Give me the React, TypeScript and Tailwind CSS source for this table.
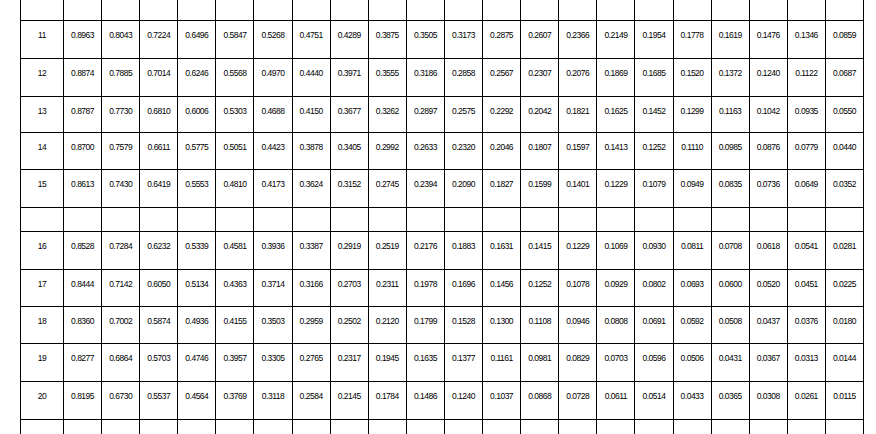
import React from "react";

const data: [string, string[]][] = [
  ["11", "0.8963 0.8043 0.7224 0.6496 0.5847 0.5268 0.4751 0.4289 0.3875 0.3505 0.3173 0.2875 0.2607 0.2366 0.2149 0.1954 0.1778 0.1619 0.1476 0.1346 0.0859".split(" ")],
  ["12", "0.8874 0.7885 0.7014 0.6246 0.5568 0.4970 0.4440 0.3971 0.3555 0.3186 0.2858 0.2567 0.2307 0.2076 0.1869 0.1685 0.1520 0.1372 0.1240 0.1122 0.0687".split(" ")],
  ["13", "0.8787 0.7730 0.6810 0.6006 0.5303 0.4688 0.4150 0.3677 0.3262 0.2897 0.2575 0.2292 0.2042 0.1821 0.1625 0.1452 0.1299 0.1163 0.1042 0.0935 0.0550".split(" ")],
  ["14", "0.8700 0.7579 0.6611 0.5775 0.5051 0.4423 0.3878 0.3405 0.2992 0.2633 0.2320 0.2046 0.1807 0.1597 0.1413 0.1252 0.1110 0.0985 0.0876 0.0779 0.0440".split(" ")],
  ["15", "0.8613 0.7430 0.6419 0.5553 0.4810 0.4173 0.3624 0.3152 0.2745 0.2394 0.2090 0.1827 0.1599 0.1401 0.1229 0.1079 0.0949 0.0835 0.0736 0.0649 0.0352".split(" ")],
  ["16", "0.8528 0.7284 0.6232 0.5339 0.4581 0.3936 0.3387 0.2919 0.2519 0.2176 0.1883 0.1631 0.1415 0.1229 0.1069 0.0930 0.0811 0.0708 0.0618 0.0541 0.0281".split(" ")],
  ["17", "0.8444 0.7142 0.6050 0.5134 0.4363 0.3714 0.3166 0.2703 0.2311 0.1978 0.1696 0.1456 0.1252 0.1078 0.0929 0.0802 0.0693 0.0600 0.0520 0.0451 0.0225".split(" ")],
  ["18", "0.8360 0.7002 0.5874 0.4936 0.4155 0.3503 0.2959 0.2502 0.2120 0.1799 0.1528 0.1300 0.1108 0.0946 0.0808 0.0691 0.0592 0.0508 0.0437 0.0376 0.0180".split(" ")],
  ["19", "0.8277 0.6864 0.5703 0.4746 0.3957 0.3305 0.2765 0.2317 0.1945 0.1635 0.1377 0.1161 0.0981 0.0829 0.0703 0.0596 0.0506 0.0431 0.0367 0.0313 0.0144".split(" ")],
  ["20", "0.8195 0.6730 0.5537 0.4564 0.3769 0.3118 0.2584 0.2145 0.1784 0.1486 0.1240 0.1037 0.0868 0.0728 0.0611 0.0514 0.0433 0.0365 0.0308 0.0261 0.0115".split(" ")],
];

type Row = { h: string; label?: string; vals?: string[]; border: boolean };

const rows: Row[] = [
  { h: "h-[21px]", border: true },
  { h: "h-[38px]", label: data[0][0], vals: data[0][1], border: true },
  { h: "h-[38px]", label: data[1][0], vals: data[1][1], border: true },
  { h: "h-[36px]", label: data[2][0], vals: data[2][1], border: true },
  { h: "h-[37px]", label: data[3][0], vals: data[3][1], border: true },
  { h: "h-[38px]", label: data[4][0], vals: data[4][1], border: true },
  { h: "h-[24px]", border: true },
  { h: "h-[38px]", label: data[5][0], vals: data[5][1], border: true },
  { h: "h-[37px]", label: data[6][0], vals: data[6][1], border: true },
  { h: "h-[37px]", label: data[7][0], vals: data[7][1], border: true },
  { h: "h-[38px]", label: data[8][0], vals: data[8][1], border: true },
  { h: "h-[38px]", label: data[9][0], vals: data[9][1], border: true },
  { h: "h-[20px]", border: false },
];

export default function App() {
  return (
    <div
      className="w-[876px] h-[434px] overflow-hidden bg-white text-black"
      style={{ fontFamily: '"Liberation Sans", Arial, sans-serif' }}
    >
      <div className="ml-[20px] w-[844px] border-l border-black">
        {rows.map((r, i) => {
          const cells = [r.label ?? "", ...(r.vals ?? Array(21).fill(""))];
          return (
            <div
              key={i}
              className={`grid grid-cols-[43px_repeat(21,minmax(0,1fr))] ${r.h} ${
                r.border ? "border-b border-black" : ""
              }`}
            >
              {cells.map((c, j) => (
                <div
                  key={j}
                  className="border-r border-black flex justify-center pt-[10px] text-[8.5px] leading-none tracking-[-0.5px]"
                >
                  {c}
                </div>
              ))}
            </div>
          );
        })}
      </div>
    </div>
  );
}
